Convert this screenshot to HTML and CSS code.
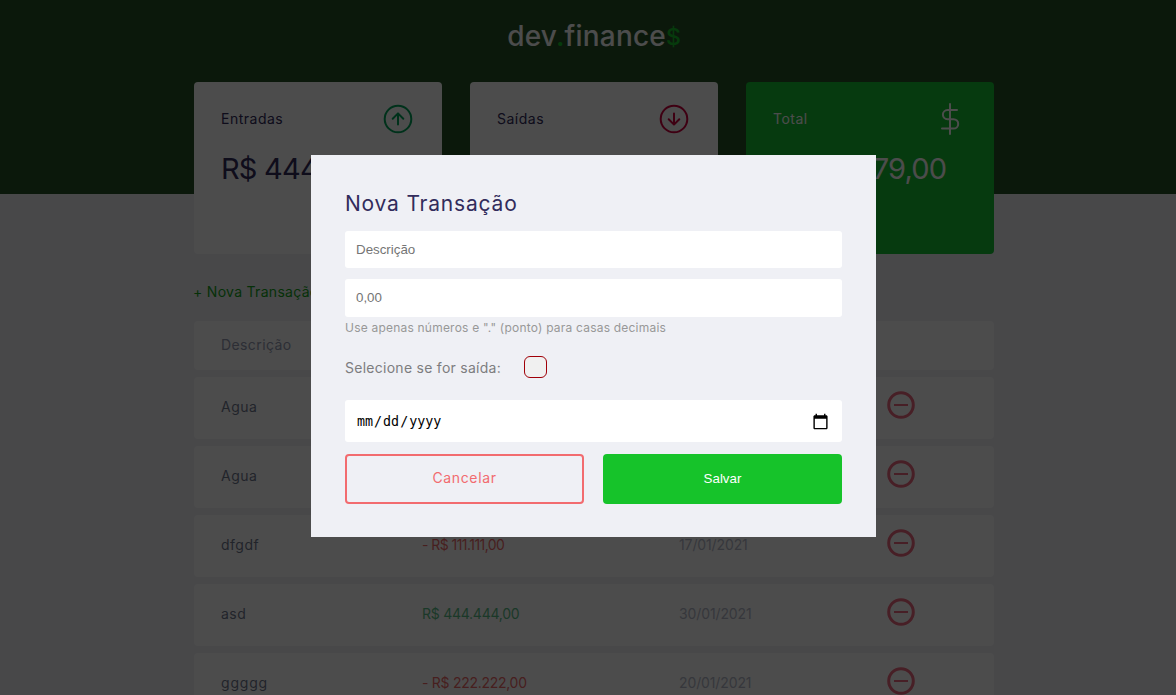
FILE: index.html
```html
<!DOCTYPE html>
<html lang="pt-br">
<head>
<meta charset="utf-8">
<title>dev.finance$</title>
<link rel="stylesheet" href="styles.css">
</head>
<body>
<svg class="defs" aria-hidden="true">
  <symbol id="minus" viewBox="0 0 28 28"><circle cx="14" cy="14" r="12.3" fill="none" stroke="#e92949" stroke-width="3"/><path d="M7 14h14" stroke="#e92949" stroke-width="2"/></symbol>
</svg>
<header class="header"><h1 class="logo"><span class="logo-text">dev<b>.</b>finance</span><b class="logo-sign">$</b></h1></header>
<main class="container">
  <section class="balance">
    <div class="card">
      <h3 class="card-head"><span class="card-name">Entradas</span>
        <svg class="card-icon" viewBox="0 0 32 32" fill="none" stroke="#00a65a" stroke-width="2" stroke-linecap="round" stroke-linejoin="round"><circle cx="16" cy="16" r="13.3"/><path d="M16 21.5V10.5M10.7 15.7L16 10.4l5.3 5.3"/></svg></h3>
      <p class="amount">R$ 444.444,00</p>
    </div>
    <div class="card">
      <h3 class="card-head"><span class="card-name">Saídas</span>
        <svg class="card-icon" viewBox="0 0 32 32" fill="none" stroke="#d1003f" stroke-width="2" stroke-linecap="round" stroke-linejoin="round"><circle cx="16" cy="16" r="13.3"/><path d="M16 10.5v11M10.7 16.3l5.3 5.3 5.3-5.3"/></svg></h3>
      <p class="amount">- R$ 333.365,00</p>
    </div>
    <div class="card total">
      <h3 class="card-head"><span class="card-name">Total</span>
        <svg class="card-icon" viewBox="0 0 32 32" fill="none" stroke="#fff" stroke-width="2" stroke-linecap="round"><path d="M16 1v30M23 7h-9.5a4.6 4.6 0 0 0 0 9.2h6a4.7 4.7 0 0 1 0 9.4H8"/></svg></h3>
      <p class="amount">R$ 111.079,00</p>
    </div>
  </section>
  <a class="new">+ Nova Transação</a>
  <section class="table">
    <div class="row head"><span>Descrição</span></div>
    <div class="row"><span class="name">Agua</span><span></span><span></span><svg class="minus"><use href="#minus"/></svg></div>
    <div class="row"><span class="name">Agua</span><span></span><span></span><svg class="minus"><use href="#minus"/></svg></div>
    <div class="row"><span class="name">dfgdf</span><span class="expense ones">- R$ 111.111,00</span><span class="date">17/01/2021</span><svg class="minus"><use href="#minus"/></svg></div>
    <div class="row"><span class="name">asd</span><span class="income">R$ 444.444,00</span><span class="date">30/01/2021</span><svg class="minus"><use href="#minus"/></svg></div>
    <div class="row"><span class="name wide">ggggg</span><span class="expense">- R$ 222.222,00</span><span class="date">20/01/2021</span><svg class="minus"><use href="#minus"/></svg></div>
  </section>
</main>
<div class="overlay">
  <div class="modal">
    <h2 class="title">Nova Transação</h2>
    <form class="form">
      <input class="field desc" type="text" placeholder="Descrição">
      <input class="field value" type="text" placeholder="0,00">
      <small class="help">Use apenas números e "." (ponto) para casas decimais</small>
      <div class="check"><label class="check-label">Selecione se for saída:</label><span class="box"></span></div>
      <input class="field day" type="date">
      <div class="actions"><a class="btn cancel"><span>Cancelar</span></a><button class="btn save" type="button">Salvar</button></div>
    </form>
  </div>
</div>
</body>
</html>
```
FILE: styles.css
```css
* { margin: 0; padding: 0; box-sizing: border-box; }
body { height: 695px; overflow: hidden; background: #f0f2f5; font: 14px Inter, sans-serif; color: #363f5f; }
.defs { position: absolute; width: 0; height: 0; }
.header { height: 194px; padding-top: 18px; background: #255326; }
.logo { display: flex; justify-content: center; padding-left: 12px; font-size: 28px; line-height: 36px; font-weight: 500; color: #fff; }
.logo b { font-weight: 500; color: #16c32a; }
.logo-text { letter-spacing: .2px; }
.logo-sign { font-size: 23px; line-height: 38px; }
.container { width: 800px; margin: -112px 0 0 194px; }
.balance { display: grid; grid-template-columns: repeat(3, 248px); gap: 28px; }
.card { height: 172px; padding: 21px 28px; border-radius: 4px; background: #fff; color: #322c5c; white-space: nowrap; }
.card-head { display: flex; justify-content: space-between; align-items: center; height: 32px; font-size: 14px; font-weight: 400; }
.card-name { padding-bottom: 2px; margin-left: -1px; letter-spacing: .5px; }
.card-icon { width: 32px; height: 32px; }
.amount { margin-top: 14px; font-size: 29px; line-height: 40px; letter-spacing: -.8px; margin-left: -1px; }
.total { background: #14c232; color: #fff; }
.new { display: block; margin: 27px 0 0 -1px; line-height: 22px; letter-spacing: .3px; color: #16a31c; }
.table { display: flex; flex-direction: column; gap: 7px; margin-top: 18px; }
.row { display: grid; grid-template-columns: 201px 257px 208px 28px; align-items: center; height: 62px; padding: 0 28px 3px 27px; border-radius: 4px; background: #fff; white-space: nowrap; }
.row > * { opacity: .7; }
.head { height: 49px; padding-bottom: 3px; color: #969cb3; letter-spacing: .4px; }
.head > * { opacity: 1; }
.name { letter-spacing: .5px; }
.wide { letter-spacing: .8px; }
.minus { width: 28px; height: 28px; margin-top: -3px; }
.expense { color: #e92929; letter-spacing: -.28px; }
.ones { letter-spacing: -.55px; }
.income { color: #12a454; letter-spacing: -.25px; }
.date { color: #969cb3; letter-spacing: -.12px; }
.overlay { position: fixed; inset: 0; background: rgba(0,0,0,.7); }
.modal { width: 565px; height: 382px; margin: 155px 0 0 311px; padding: 34px; background: #eff0f5; }
.title { font-size: 21px; line-height: 30px; font-weight: 400; letter-spacing: .8px; color: #322c5c; }
.form { display: flex; flex-direction: column; width: 497px; margin-top: 12px; }
.field { width: 100%; border: 0; border-radius: 3px; background: #fff; padding: 0 11px; font: 13.333px "Liberation Sans", sans-serif; }
.field::placeholder { color: #757575; }
.desc { height: 37px; }
.value { height: 38px; margin-top: 11px; padding-bottom: 1px; }
.help { font-size: 12px; line-height: 22px; letter-spacing: .21px; color: #989898; white-space: nowrap; }
.check { display: flex; align-items: center; height: 40px; margin-top: 8px; color: #7d7d7f; }
.check-label { width: 179px; letter-spacing: .27px; white-space: nowrap; }
.box { width: 23px; height: 22px; border: 1px solid #a00008; border-radius: 6px; background: #f0f0f0; }
.day { height: 42px; margin-top: 13px; padding-top: 1px; font-family: monospace; color: #000; }
.day::-webkit-calendar-picker-indicator { width: 17px; height: 17px; padding: 0; margin-right: 2px; background-size: 17px 17px; }
.actions { display: flex; justify-content: space-between; margin-top: 12px; }
.btn { display: flex; align-items: center; justify-content: center; width: 239px; height: 50px; border-radius: 4px; }
.cancel { padding-bottom: 3px; border: 2px solid #f26b6f; color: #f26b6f; letter-spacing: .65px; }
.save { padding-bottom: 1px; border: 0; background: #16c32a; color: #fff; font: 13.333px "Liberation Sans", sans-serif; }
```
